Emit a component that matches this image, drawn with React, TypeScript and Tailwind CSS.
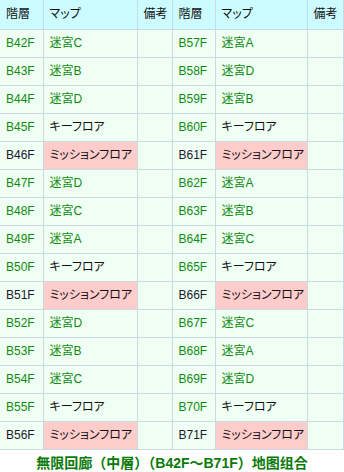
type Kind = "maze" | "key" | "mission";

interface FloorRow {
  floor: string;
  map: string;
  kind: Kind;
}

const maze = (floor: string, map: string): FloorRow => ({ floor, map, kind: "maze" });
const key = (floor: string): FloorRow => ({ floor, map: "キーフロア", kind: "key" });
const mission = (floor: string): FloorRow => ({ floor, map: "ミッションフロア", kind: "mission" });

const left: FloorRow[] = [
  maze("B42F", "迷宮C"),
  maze("B43F", "迷宮B"),
  maze("B44F", "迷宮D"),
  key("B45F"),
  mission("B46F"),
  maze("B47F", "迷宮D"),
  maze("B48F", "迷宮C"),
  maze("B49F", "迷宮A"),
  key("B50F"),
  mission("B51F"),
  maze("B52F", "迷宮D"),
  maze("B53F", "迷宮B"),
  maze("B54F", "迷宮C"),
  key("B55F"),
  mission("B56F"),
];

const right: FloorRow[] = [
  maze("B57F", "迷宮A"),
  maze("B58F", "迷宮D"),
  maze("B59F", "迷宮B"),
  key("B60F"),
  mission("B61F"),
  maze("B62F", "迷宮A"),
  maze("B63F", "迷宮B"),
  maze("B64F", "迷宮C"),
  key("B65F"),
  mission("B66F"),
  maze("B67F", "迷宮C"),
  maze("B68F", "迷宮A"),
  maze("B69F", "迷宮D"),
  key("B70F"),
  mission("B71F"),
];

const cell =
  "border border-[#c9dbe0] h-[28px] px-[6px] py-0 text-left align-middle font-normal whitespace-nowrap overflow-hidden";

function Cells({ row, first }: { row: FloorRow; first?: boolean }) {
  const floorColor = row.kind === "mission" ? "text-[#1a1a2e]" : "text-[#128a12]";
  const mapStyle =
    row.kind === "mission"
      ? "bg-[#ffcccc] text-[#111111]"
      : row.kind === "key"
        ? "text-[#111111]"
        : "text-[#128a12]";
  return (
    <>
      <td className={`${cell} ${floorColor} ${first ? "border-l-0" : ""}`}>{row.floor}</td>
      <td className={`${cell} ${mapStyle}`}>{row.map}</td>
      <td className={cell}></td>
    </>
  );
}

export default function App() {
  return (
    <div className="w-[344px] h-[472px] bg-white font-['Liberation_Sans','Noto_Sans_CJK_JP',sans-serif] text-[12px] leading-[14px]">
      <table className="w-[343px] table-fixed border-collapse bg-[#f0fff4] [font-feature-settings:'palt']">
        <colgroup>
          <col className="w-[43px]" />
          <col className="w-[94px]" />
          <col className="w-[35px]" />
          <col className="w-[43px]" />
          <col className="w-[92px]" />
          <col className="w-[36px]" />
        </colgroup>
        <thead>
          <tr className="bg-[#ccfcff] text-[#111111]">
            {["階層", "マップ", "備考", "階層", "マップ", "備考"].map((h, i) => (
              <th
                key={i}
                className={`${cell} h-[29px] border-t-0 ${i === 0 ? "border-l-0" : ""}`}
              >
                {h}
              </th>
            ))}
          </tr>
        </thead>
        <tbody>
          {left.map((row, i) => (
            <tr key={row.floor}>
              <Cells row={row} first />
              <Cells row={right[i]} />
            </tr>
          ))}
        </tbody>
      </table>
      <p className="mt-[5px] text-center font-bold text-[14px] leading-[17px] text-[#0a7a0a]">
        無限回廊（中層）（B42F～B71F）地图组合
      </p>
    </div>
  );
}
